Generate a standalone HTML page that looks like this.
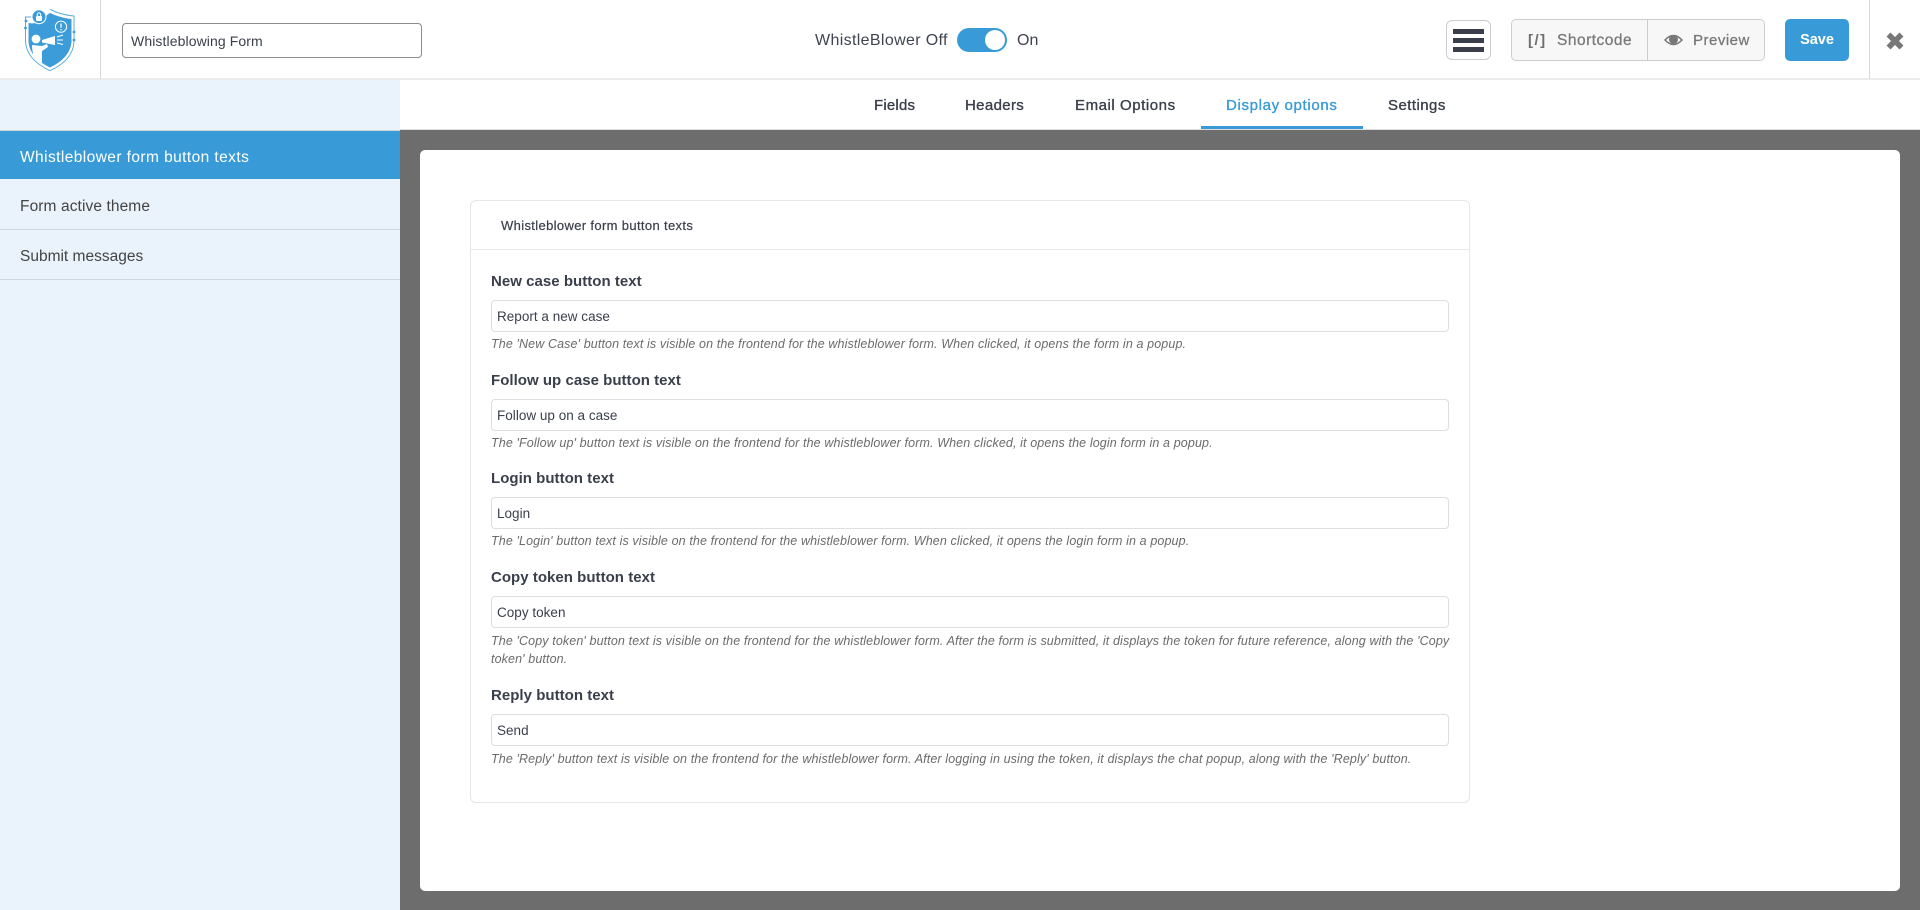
<!DOCTYPE html>
<html lang="en"><head><meta charset="utf-8"><title>Whistleblowing Form</title>
<style>
*{box-sizing:border-box}
html,body{margin:0;padding:0;width:1920px;height:910px;overflow:hidden;background:#fff;font-family:"Liberation Sans",sans-serif;color:#3a3f4b}
.a{position:absolute}
.t{position:absolute;white-space:nowrap;line-height:20px;height:20px}
.tab{font-size:15px;font-weight:400;color:#3a3f4b;-webkit-text-stroke:.35px currentColor}
.lab{left:491px;font-size:15px;font-weight:700;color:#3a3f4b;letter-spacing:.03px}
.inp{position:absolute;left:491px;width:958px;height:32px;border:1px solid #dedede;border-radius:4px;background:#fff;font-size:13.5px;line-height:30px;padding:1px 0 0 5px;color:#3a3f4b;letter-spacing:.02px}
.help{left:491px;font-size:12.5px;font-style:italic;color:#6b6b6b;letter-spacing:.12px}
.side{left:20px;font-size:15.5px;color:#444;letter-spacing:.1px}
</style></head><body>

<div class="a" style="left:0;top:0;width:1920px;height:80px;background:#fff;border-bottom:2px solid #ececec"></div>
<div class="a" style="left:100px;top:0;width:1px;height:79px;background:#d8d8d8"></div>
<div class="a" style="left:1869px;top:0;width:1px;height:79px;background:#d8d8d8"></div>

<svg class="a" style="left:20px;top:4px" width="60" height="72" viewBox="0 0 60 72">
<path d="M30 5.300 L36 8 Q46 11.500 54 12 V38 Q53 56 30 66.700 Q7 56 5.500 38 V13 H11" fill="none" stroke="#5badde" stroke-width="1"/>
<path d="M30 9 L36 11.500 Q45 14.500 51.500 15 V38 Q50 54 30 63.500 Q10 54 8.500 38 V19 Q20 21 27 11 Z" fill="#3c9cd9"/>
<circle cx="19" cy="12.700" r="7" fill="#3c9cd9" stroke="#fff" stroke-width="1"/>
<rect x="16" y="12" width="6" height="5" rx="1" fill="#fff"/>
<path d="M17.300 12 V10.600 a1.700 1.700 0 0 1 3.400 0 V12" fill="none" stroke="#fff" stroke-width="1"/>
<circle cx="41" cy="22.700" r="5.600" fill="none" stroke="#fff" stroke-width="1"/>
<path d="M41 19.500 V23.800 M41 25 V26.300" stroke="#fff" stroke-width="1.300"/>
<circle cx="16" cy="35" r="4.400" fill="#fff"/>
<path d="M12 41 L22 42 L27 40 L28 43 L22 47 V59 L14 53 Q12 47 12 41 Z" fill="#fff"/>
<path d="M22 36 L35 32 V41 L22 38.500 Z" fill="#fff"/>
<path d="M37 33 L43 31 M37 36 H43 M37 39 L43 40.500" stroke="#fff" stroke-width="1"/>
<circle cx="5.500" cy="24" r="1.400" fill="#3c9cd9"/><circle cx="54" cy="28" r="1.400" fill="#3c9cd9"/><circle cx="54" cy="36" r="1.400" fill="#3c9cd9"/><circle cx="6" cy="17" r="1.400" fill="#3c9cd9"/>
</svg>

<div class="a" style="left:122px;top:23px;width:300px;height:35px;border:1px solid #8c8c8c;border-radius:4px"></div>
<div class="t" style="left:131px;top:31px;font-size:14px;color:#3a3f4b;letter-spacing:.1px">Whistleblowing Form</div>

<div class="t" style="left:815px;top:31px;font-size:16px;color:#3f4450;letter-spacing:.35px">WhistleBlower Off</div>
<div class="a" style="left:957px;top:28px;width:50px;height:24px;border-radius:12px;background:#389bd8"></div>
<div class="a" style="left:985px;top:30px;width:20px;height:20px;border-radius:50%;background:#fff"></div>
<div class="t" style="left:1017px;top:31px;font-size:16px;color:#3f4450">On</div>

<div class="a" style="left:1446px;top:20px;width:45px;height:40px;border:1px solid #ccc;border-radius:6px;background:#fff"></div>
<div class="a" style="left:1453px;top:29px;width:31px;height:5px;background:#3a3f4b"></div>
<div class="a" style="left:1453px;top:38px;width:31px;height:5px;background:#3a3f4b"></div>
<div class="a" style="left:1453px;top:47px;width:31px;height:5px;background:#3a3f4b"></div>

<div class="a" style="left:1511px;top:19px;width:254px;height:42px;border:1px solid #cdcdcd;border-radius:5px;background:#f7f7f7"></div>
<div class="a" style="left:1647px;top:19px;width:1px;height:42px;background:#cdcdcd"></div>
<div class="t" style="left:1528px;top:31px;font-size:15px;font-weight:700;color:#6f6f6f;letter-spacing:1.5px">[/]</div>
<div class="t" style="left:1557px;top:31px;font-size:15.5px;color:#777;letter-spacing:.5px;-webkit-text-stroke:.25px currentColor">Shortcode</div>
<svg class="a" style="left:1664px;top:32px" width="19" height="16" viewBox="0 0 19 16">
<path d="M1 8 Q9.500 -1 18 8 Q9.500 17 1 8 Z" fill="none" stroke="#777" stroke-width="1.500"/>
<circle cx="9.500" cy="7.500" r="4.500" fill="#777"/></svg>
<div class="t" style="left:1693px;top:31px;font-size:15px;color:#777;letter-spacing:.5px;-webkit-text-stroke:.25px currentColor">Preview</div>

<div class="a" style="left:1785px;top:19px;width:64px;height:42px;border-radius:5px;background:#389bd8"></div>
<div class="t" style="left:1785px;width:64px;text-align:center;top:30px;font-size:14.5px;font-weight:700;color:#fff">Save</div>

<svg class="a" style="left:1886px;top:32px" width="18" height="18" viewBox="0 0 18 18">
<path d="M2.500 2.500 L15.500 15.500 M15.500 2.500 L2.500 15.500" stroke="#777" stroke-width="5.500"/></svg>

<div class="a" style="left:0;top:80px;width:400px;height:830px;background:#eaf2fc"></div>
<div class="a" style="left:0;top:130px;width:400px;height:1px;background:#cfd6e0"></div>
<div class="a" style="left:0;top:131px;width:400px;height:48px;background:#389bd8"></div>
<div class="a" style="left:0;top:229px;width:400px;height:1px;background:#cfd6e0"></div>
<div class="a" style="left:0;top:279px;width:400px;height:1px;background:#cfd6e0"></div>
<div class="t side" style="top:148px;color:#fff;letter-spacing:.42px">Whistleblower form button texts</div>
<div class="t side" style="top:197px">Form active theme</div>
<div class="t side" style="top:247px;letter-spacing:0">Submit messages</div>

<div class="t tab" style="left:874px;top:96px;letter-spacing:.2px">Fields</div>
<div class="t tab" style="left:965px;top:96px;letter-spacing:.35px">Headers</div>
<div class="t tab" style="left:1075px;top:96px;letter-spacing:.56px">Email Options</div>
<div class="t tab" style="left:1226px;top:96px;color:#389bd8;letter-spacing:.65px">Display options</div>
<div class="t tab" style="left:1388px;top:96px;letter-spacing:.45px">Settings</div>
<div class="a" style="left:1201px;top:126px;width:162px;height:3px;background:#389bd8"></div>
<div class="a" style="left:400px;top:129px;width:1520px;height:1px;background:#ddd"></div>

<div class="a" style="left:400px;top:130px;width:1520px;height:780px;background:#6d6d6d"></div>
<div class="a" style="left:420px;top:150px;width:1480px;height:741px;background:#fff;border-radius:5px"></div>
<div class="a" style="left:470px;top:200px;width:1000px;height:603px;border:1px solid #e6e6e6;border-radius:6px"></div>
<div class="a" style="left:471px;top:249px;width:998px;height:1px;background:#e8e8e8"></div>
<div class="t" style="left:501px;top:216px;font-size:13px;color:#3a3f4b;letter-spacing:.35px;-webkit-text-stroke:.2px currentColor">Whistleblower form button texts</div>

<div class="t lab" style="top:272px">New case button text</div>
<div class="inp" style="top:300px">Report a new case</div>
<div class="t help" style="top:334px">The 'New Case' button text is visible on the frontend for the whistleblower form. When clicked, it opens the form in a popup.</div>

<div class="t lab" style="top:371px">Follow up case button text</div>
<div class="inp" style="top:399px">Follow up on a case</div>
<div class="t help" style="top:433px">The 'Follow up' button text is visible on the frontend for the whistleblower form. When clicked, it opens the login form in a popup.</div>

<div class="t lab" style="top:469px">Login button text</div>
<div class="inp" style="top:497px">Login</div>
<div class="t help" style="top:531px">The 'Login' button text is visible on the frontend for the whistleblower form. When clicked, it opens the login form in a popup.</div>

<div class="t lab" style="top:568px">Copy token button text</div>
<div class="inp" style="top:596px">Copy token</div>
<div class="t help" style="top:631px">The 'Copy token' button text is visible on the frontend for the whistleblower form. After the form is submitted, it displays the token for future reference, along with the 'Copy</div>
<div class="t help" style="top:649px">token' button.</div>

<div class="t lab" style="top:686px">Reply button text</div>
<div class="inp" style="top:714px">Send</div>
<div class="t help" style="top:749px">The 'Reply' button text is visible on the frontend for the whistleblower form. After logging in using the token, it displays the chat popup, along with the 'Reply' button.</div>

</body></html>
